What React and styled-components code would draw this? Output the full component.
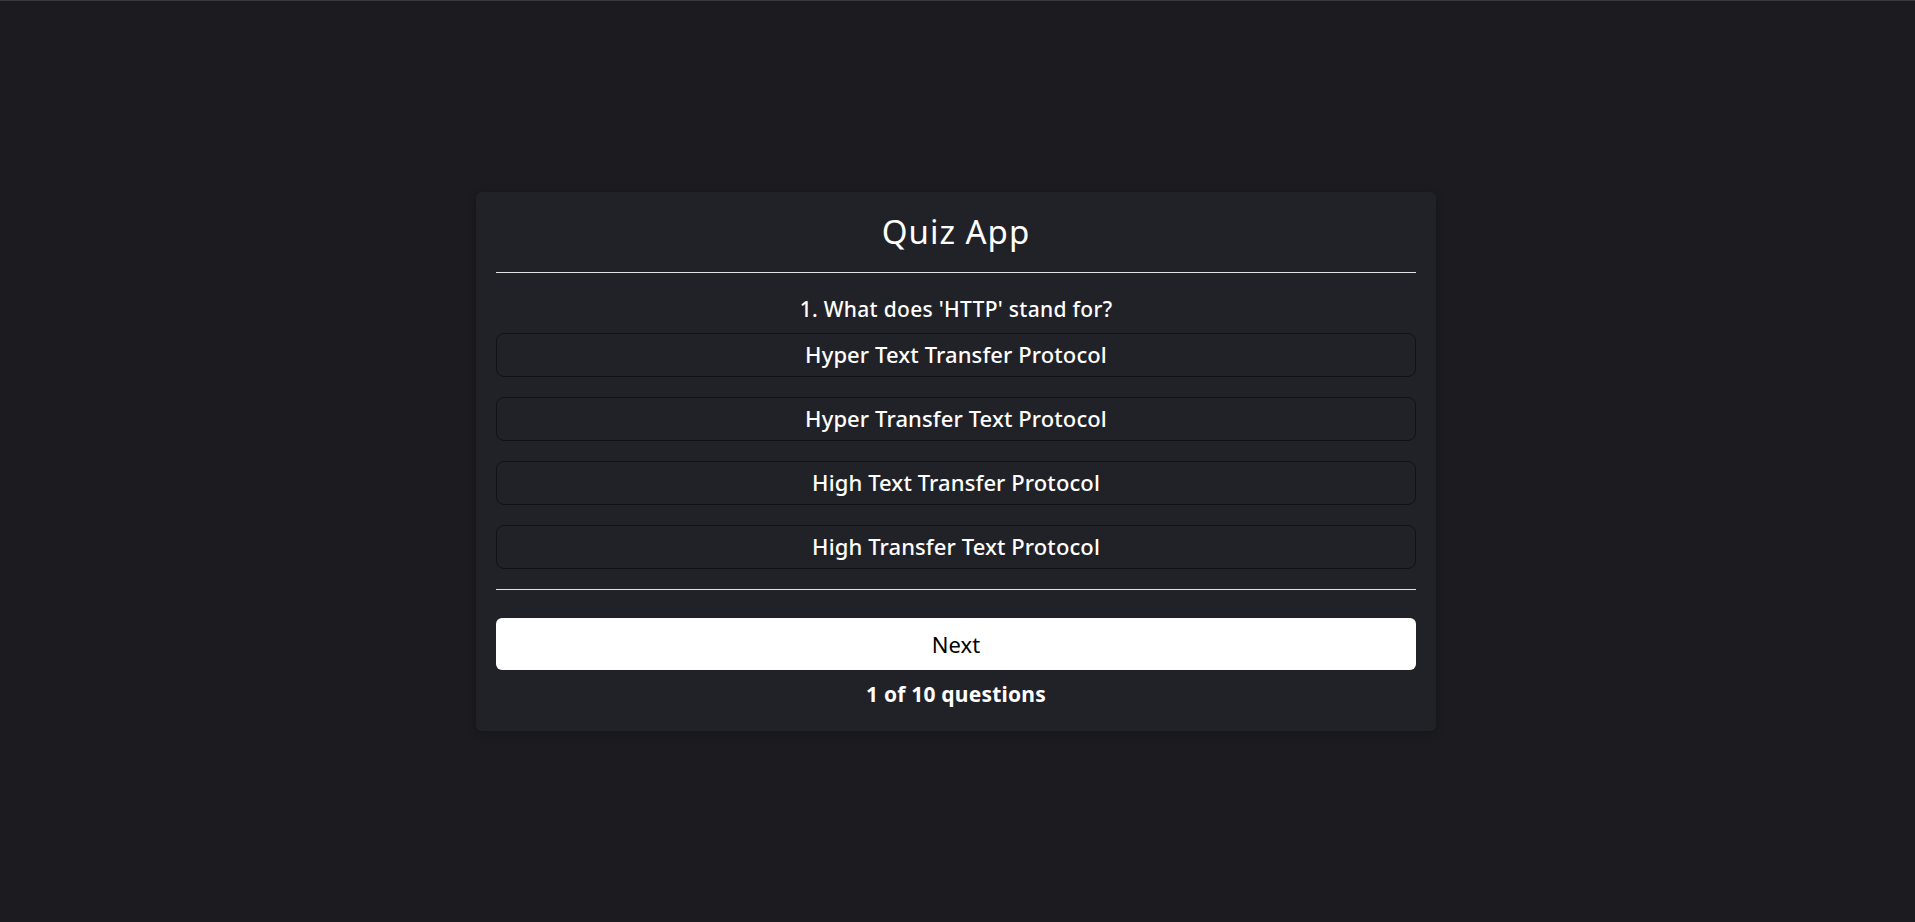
import styled, { createGlobalStyle } from "styled-components"

const GlobalStyle = createGlobalStyle`
  * { box-sizing: border-box; }
  body {
    margin: 0;
    background: #1c1b20;
    font-family: "Noto Sans", "Open Sans", sans-serif;
    color: #fff;
  }
`

const questions = [
  {
    question: "What does 'HTTP' stand for?",
    options: [
      "Hyper Text Transfer Protocol",
      "Hyper Transfer Text Protocol",
      "High Text Transfer Protocol",
      "High Transfer Text Protocol",
    ],
  },
]

export default function App() {
  const index = 0
  const current = questions[index]

  return (
    <Page>
      <GlobalStyle />
      <Card>
        <Title>Quiz App</Title>
        <Divider />
        <Question>{index + 1}. {current.question}</Question>
        <OptionList>
          {current.options.map((opt) => (
            <Option key={opt}>{opt}</Option>
          ))}
        </OptionList>
        <Divider $bottom />
        <NextButton>Next</NextButton>
        <Counter>{index + 1} of 10 questions</Counter>
      </Card>
    </Page>
  )
}

const Page = styled.div`
  min-height: 100vh;
  display: flex;
  align-items: center;
  justify-content: center;
  padding-right: 3px;
  border-top: 1px solid #3a3a3d;
`
const Card = styled.div`
  width: 960px;
  background: #212227;
  border-radius: 6px;
  padding: 20px 20px 22px;
  display: flex;
  flex-direction: column;
  box-shadow: 0 2px 10px rgba(0, 0, 0, 0.25);
`
const Title = styled.h1`
  margin: 0;
  font-size: 33px;
  font-weight: 400;
  letter-spacing: 1px;
  line-height: 40px;
  text-align: center;
`
const Divider = styled.hr`
  margin: ${(p) => (p.$bottom ? "20px 0 28px" : "20px 0 22px")};
  border: none;
  height: 1px;
  background: #e2e2e2;
`
const Question = styled.h2`
  margin: 0 0 10px;
  font-size: 21px;
  font-weight: 500;
  letter-spacing: 0.3px;
  line-height: 28px;
  text-align: center;
`
const OptionList = styled.ul`
  list-style: none;
  margin: 0;
  padding: 0;
  display: flex;
  flex-direction: column;
  gap: 20px;
`
const Option = styled.li`
  height: 44px;
  padding-bottom: 2px;
  display: flex;
  align-items: center;
  justify-content: center;
  border: 1px solid #111216;
  border-radius: 8px;
  font-size: 22px;
  font-weight: 500;
  letter-spacing: 0.1px;
  cursor: pointer;
`
const NextButton = styled.button`
  height: 52px;
  border: none;
  border-radius: 6px;
  background: #fff;
  color: #000;
  font-family: inherit;
  font-size: 22px;
  font-weight: 400;
  cursor: pointer;
`
const Counter = styled.p`
  margin: 9px 0 0;
  text-align: center;
  font-size: 21px;
  font-weight: 700;
  letter-spacing: 0.2px;
  line-height: 30px;
`
